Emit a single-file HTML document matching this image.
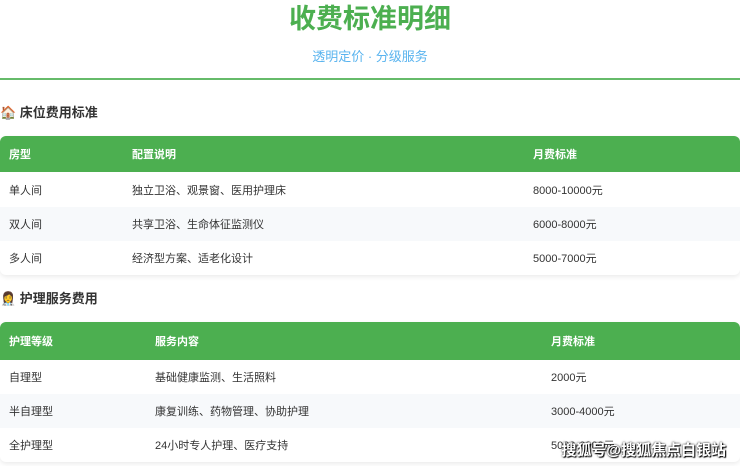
<!DOCTYPE html><html><head><meta charset="utf-8"><style>
*{margin:0;padding:0;box-sizing:border-box}
body{width:740px;height:466px;overflow:hidden;background:#fff;font-family:"Liberation Sans","Noto Sans CJK SC",sans-serif;position:relative;color:#333}
h1{position:absolute;top:2px;left:0;width:740px;text-align:center;font-size:27px;color:#4caf50;font-weight:bold;line-height:34px}
.sub{position:absolute;top:46px;left:0;width:740px;text-align:center;font-size:13px;color:#5ab4ef}
.line{position:absolute;top:78px;left:0;width:740px;height:2px;background:#66bb6a}
.h{position:absolute;left:0;font-size:13px;font-weight:bold;color:#333}
table{position:absolute;left:0;width:740px;border-collapse:collapse;font-size:11px;border-radius:6px;overflow:hidden;box-shadow:0 2px 5px rgba(0,0,0,.08)}
th{background:#4caf50;color:#fff;text-align:left;font-weight:bold;padding-left:9px}
td{padding-left:9px;color:#333}
tr.g td{background:#f7f9fb}
.wm{position:absolute;right:14px;top:439px;font-size:15px;color:#fff;font-weight:bold;text-shadow:0 0 2px #000,1px 1px 1px #000}
</style></head><body>
<h1>收费标准明细</h1>
<div class="sub">透明定价 · 分级服务</div>
<div class="line"></div>
<div class="h" style="top:102px">🏠 床位费用标准</div>
<table style="top:136px">
<colgroup><col style="width:123px"><col style="width:401px"><col></colgroup>
<tr style="height:36px"><th>房型</th><th>配置说明</th><th>月费标准</th></tr>
<tr style="height:35px"><td>单人间</td><td>独立卫浴、观景窗、医用护理床</td><td>8000-10000元</td></tr>
<tr class="g" style="height:34px"><td>双人间</td><td>共享卫浴、生命体征监测仪</td><td>6000-8000元</td></tr>
<tr style="height:34px"><td>多人间</td><td>经济型方案、适老化设计</td><td>5000-7000元</td></tr>
</table>
<div class="h" style="top:288px">👩‍⚕️ 护理服务费用</div>
<table style="top:322px">
<colgroup><col style="width:146px"><col style="width:396px"><col></colgroup>
<tr style="height:38px"><th>护理等级</th><th>服务内容</th><th>月费标准</th></tr>
<tr style="height:34px"><td>自理型</td><td>基础健康监测、生活照料</td><td>2000元</td></tr>
<tr class="g" style="height:34px"><td>半自理型</td><td>康复训练、药物管理、协助护理</td><td>3000-4000元</td></tr>
<tr style="height:34px"><td>全护理型</td><td>24小时专人护理、医疗支持</td><td>5000-6000元</td></tr>
</table>
<div class="wm">搜狐号@搜狐焦点白银站</div>
</body></html>
